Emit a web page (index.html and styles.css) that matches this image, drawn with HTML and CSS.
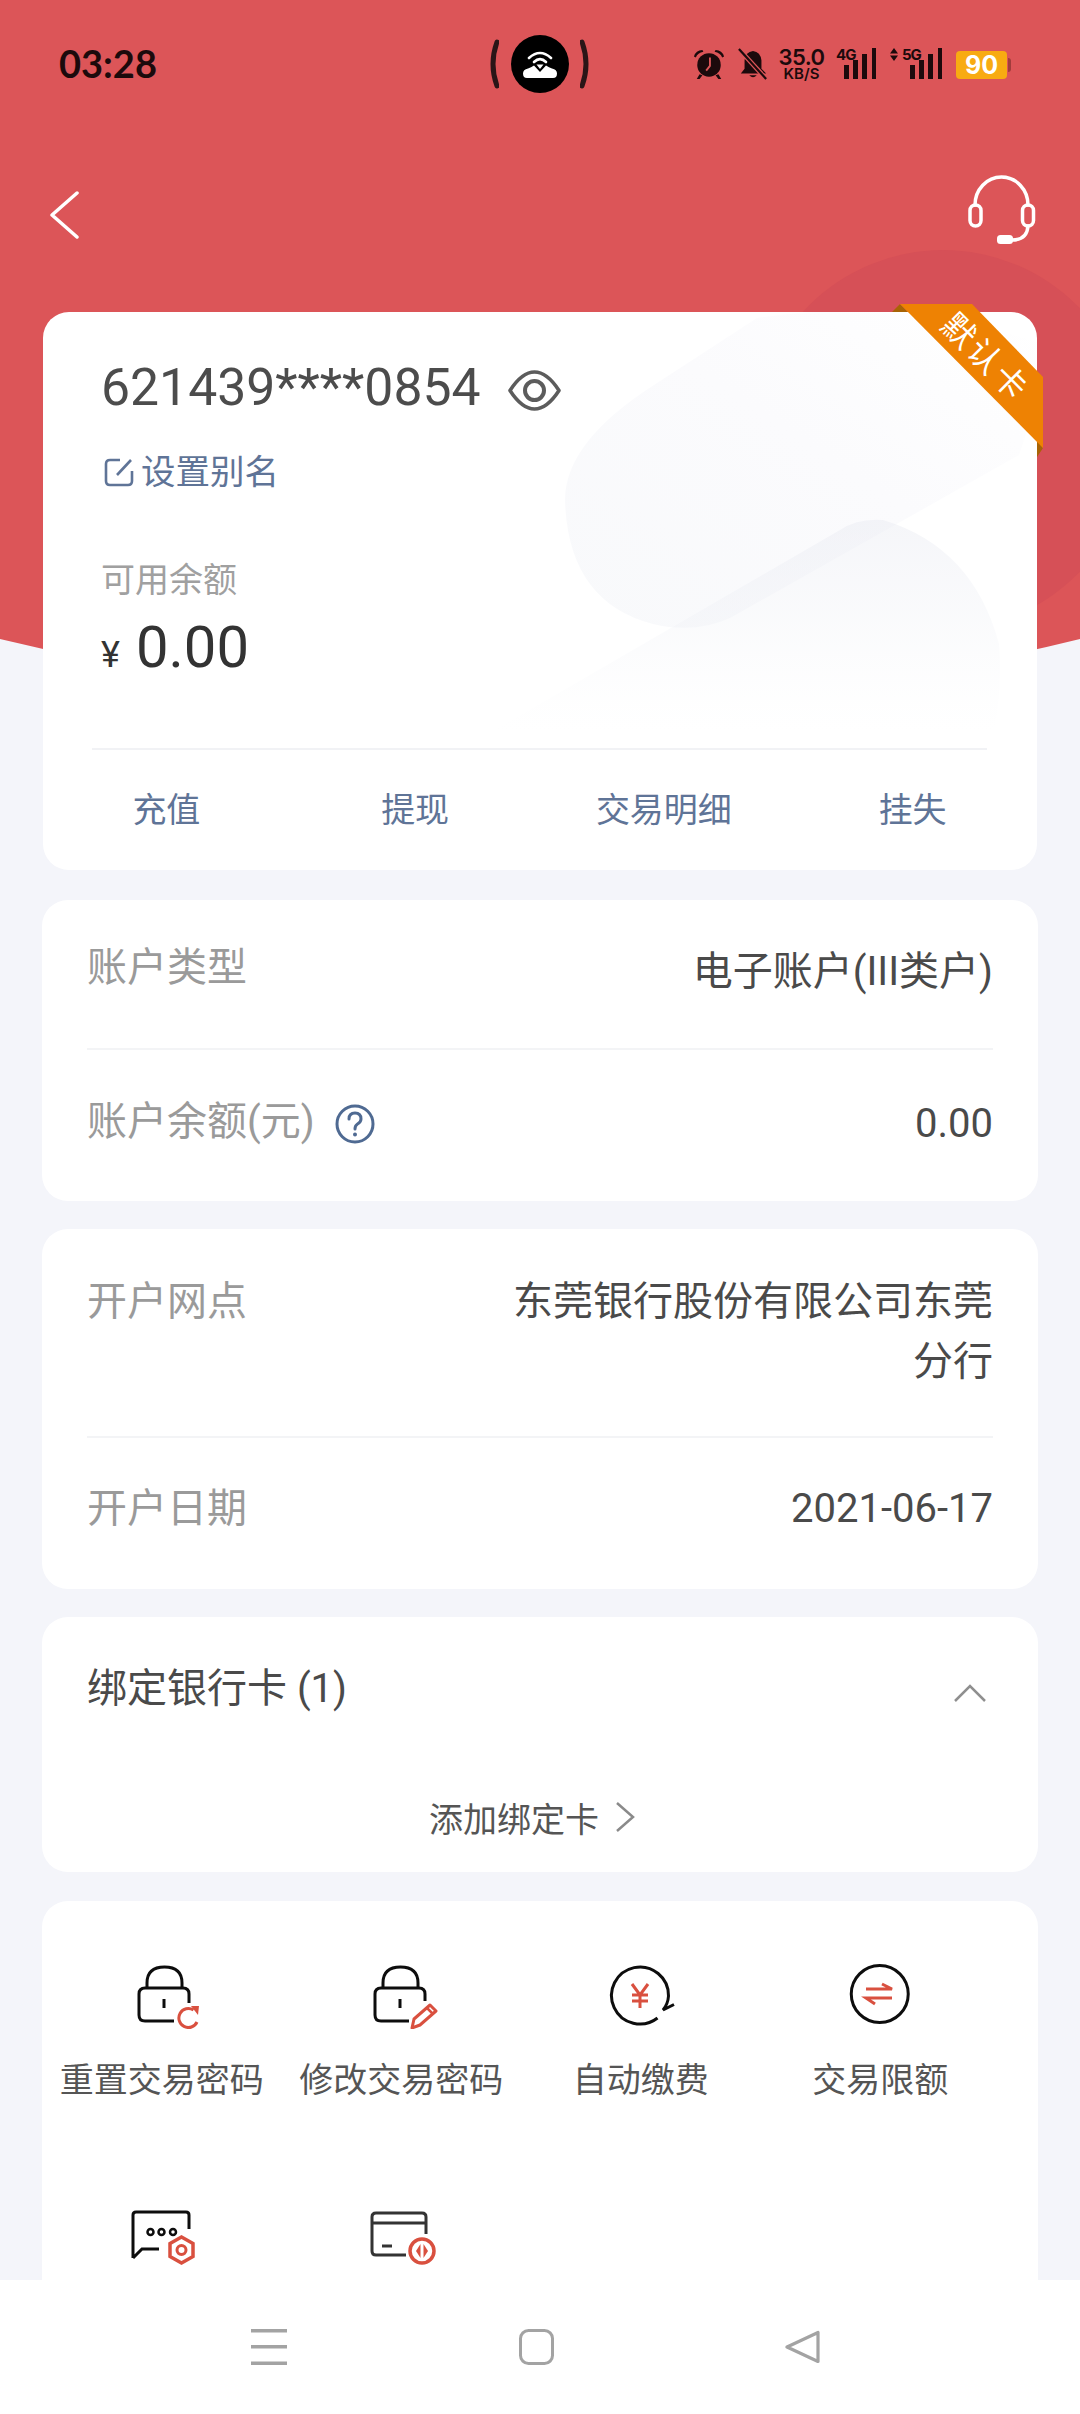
FILE: index.html
```html
<!DOCTYPE html>
<html lang="zh">
<head>
<meta charset="utf-8">
<title>账户详情</title>
<link rel="stylesheet" href="styles.css">
</head>
<body>
<div class="screen">
  <svg class="backdrop" width="1080" height="720" viewBox="0 0 1080 720" aria-hidden="true">
    <clipPath id="redclip"><path d="M0 0H1080V639Q540 772 0 639Z"/></clipPath>
    <path d="M0 0H1080V639Q540 772 0 639Z" fill="#dc5558"/>
    <circle cx="943" cy="440" r="190" fill="#d65057" clip-path="url(#redclip)"/>
  </svg>

  <header class="status">
    <span class="time">03:28</span>
    <div class="island">
      <svg width="10" height="50" viewBox="0 0 10 50"><path d="M8 3Q0 25 8 47" fill="none" stroke="#2a1517" stroke-width="5" stroke-linecap="round"/></svg>
      <span class="dot">
        <svg width="34" height="27" viewBox="0 0 34 27"><g fill="none" stroke="#fff" stroke-width="2.600" stroke-linecap="round"><path d="M6 7Q17 -3 28 7"/><path d="M11 11Q17 5 23 11"/></g><path d="M13.500 13.500H20.500L17 18Z" fill="#fff"/><path d="M4 27Q0 27 0 22.500Q0 18.500 5 17.500Q8 16.500 11 14.500L17 21L23 14.500Q26 16.500 29 17.500Q34 18.500 34 22.500Q34 27 30 27Z" fill="#fff"/></svg>
      </span>
      <svg width="10" height="50" viewBox="0 0 10 50"><path d="M2 3Q10 25 2 47" fill="none" stroke="#2a1517" stroke-width="5" stroke-linecap="round"/></svg>
    </div>
    <div class="sys">
      <svg class="ic-alarm" width="32" height="32" viewBox="0 0 34 34"><g fill="#1c0a0c"><circle cx="17" cy="18" r="12.500"/><path d="M1 9Q3 2 10 2L11 4Q5 5 3 10ZM33 9Q31 2 24 2L23 4Q29 5 31 10Z"/><path d="M7 28l-3 5h3l3-4zM27 28l3 5h-3l-3-4z"/></g><path d="M18 10V19L14 24" fill="none" stroke="#dc5558" stroke-width="2"/></svg>
      <svg class="ic-bell" width="30" height="32" viewBox="0 0 32 34"><path d="M16 3Q24 4 25 13V22L30 27H3L7 22V13Q8 4 16 3Z" fill="#1c0a0c"/><path d="M12 29Q16 33 20 29Z" fill="#1c0a0c"/><path d="M0 0L31 34" stroke="#dc5558" stroke-width="5"/><path d="M1 1L30 33" stroke="#1c0a0c" stroke-width="2.400"/></svg>
      <span class="speed"><b>35.0</b><i>KB/S</i></span>
      <span class="net"><span class="net-l">4G</span><svg width="32" height="31" viewBox="0 0 32 31"><g fill="#1c0a0c"><rect x="0" y="17" width="5" height="14"/><rect x="9" y="12" width="5" height="19"/><rect x="18" y="6" width="5" height="25"/><rect x="28" y="0" width="4" height="31"/></g></svg></span>
      <span class="net net-5"><svg class="updown" width="8" height="13" viewBox="0 0 8 13"><path d="M4 0L8 5.500H0ZM4 13L8 7.500H0Z" fill="#1c0a0c"/></svg><span class="net-l">5G</span><svg width="32" height="31" viewBox="0 0 32 31"><g fill="#1c0a0c"><rect x="0" y="17" width="5" height="14"/><rect x="9" y="12" width="5" height="19"/><rect x="18" y="6" width="5" height="25"/><rect x="28" y="0" width="4" height="31"/></g></svg></span>
      <span class="batt"><span class="batt-body">90</span><span class="batt-tip"></span></span>
    </div>
  </header>

  <nav class="topbar">
    <svg width="32" height="48" viewBox="0 0 32 48"><path d="M28 2L3 24L28 46" fill="none" stroke="#fff" stroke-width="3.500" stroke-linecap="round" stroke-linejoin="round"/></svg>
    <svg class="headset" width="68" height="70" viewBox="0 0 68 70"><g fill="none" stroke="#fff" stroke-width="3.500" stroke-linecap="round"><path d="M7 30A26.500 28 0 0 1 60 30"/><rect x="2" y="30" width="11" height="21" rx="5.500"/><rect x="54.500" y="30" width="11" height="21" rx="5.500"/><path d="M60 51Q59 65 44 65"/></g><rect x="29" y="60" width="16" height="9" rx="3.500" fill="#fff"/></svg>
  </nav>

  <main class="content">
    <section class="card bal">
      <svg class="water" width="994" height="558" viewBox="0 0 994 558" aria-hidden="true">
        <defs>
          <linearGradient id="wg" x1="1" y1="0" x2="0" y2="1"><stop offset="0" stop-color="#fff"/><stop offset=".45" stop-color="#fbfbfd"/><stop offset="1" stop-color="#f8f9fb"/></linearGradient>
          <linearGradient id="wg2" gradientUnits="userSpaceOnUse" x1="0" y1="208" x2="0" y2="420"><stop offset="0" stop-color="#e6e8f0" stop-opacity=".4"/><stop offset=".45" stop-color="#eceef4" stop-opacity=".28"/><stop offset="1" stop-color="#f4f5f9" stop-opacity="0"/></linearGradient>
        </defs>
        <path d="M714 6L611 73Q522 130 522 188Q525 290 610 312Q652 322 687 306L976 143L994 90V30Q850 -15 714 6Z" fill="url(#wg)"/>
        <path d="M440 425L797 218Q815 206 840 208Q930 235 956 332Q960 380 949 430Z" fill="url(#wg2)"/>
      </svg>
      <div class="ribbon">
        <svg class="ribbon-bg" width="156" height="160" viewBox="0 0 156 160" aria-hidden="true">
          <path d="M4 9L12 1L20 9Z" fill="#a86405"/>
          <path d="M149 137L155 145L149 154Z" fill="#a86405"/>
          <path d="M12 1H84L155 74V145Z" fill="#ee8203"/>
        </svg>
        <span class="ribbon-t">默认卡</span>
      </div>
      <div class="bal-top">
        <div class="no-row">
          <span class="no">621439****0854</span>
          <svg class="eye" width="53" height="41" viewBox="0 0 53 41"><path d="M2 20.500Q14 2 26.500 2Q39 2 51 20.500Q39 39 26.500 39Q14 39 2 20.500Z" fill="none" stroke="#5c5c5c" stroke-width="3.600" stroke-linejoin="round"/><circle cx="26.500" cy="20.500" r="9.500" fill="none" stroke="#5c5c5c" stroke-width="4"/></svg>
        </div>
        <div class="alias">
          <svg width="30" height="30" viewBox="0 0 30 30"><path d="M16 3H6Q2 3 2 7V24Q2 28 6 28H24Q28 28 28 24V14" fill="none" stroke="#5f7497" stroke-width="2.600"/><path d="M13 18L27 3" stroke="#5f7497" stroke-width="2.600" fill="none"/></svg>
          <span>设置别名</span>
        </div>
        <div class="avail">可用余额</div>
        <div class="amount"><span class="yen">¥</span><span class="amt">0.00</span></div>
      </div>
      <div class="bal-line"></div>
      <div class="actions">
        <span>充值</span><span>提现</span><span>交易明细</span><span>挂失</span>
      </div>
    </section>

    <section class="card card-wide">
      <div class="row row-a">
        <span class="k">账户类型</span><span class="v">电子账户(III类户)</span>
      </div>
      <div class="row row-b">
        <span class="k">账户余额(元)<svg class="q" width="40" height="40" viewBox="0 0 40 40"><circle cx="20" cy="20" r="18" fill="none" stroke="#4f6a92" stroke-width="3"/><path d="M14 15Q14 9 20 9Q26 9 26 15Q26 18 22.500 20Q20 21.500 20 25" fill="none" stroke="#4f6a92" stroke-width="3" stroke-linecap="round"/><circle cx="20" cy="30.500" r="2" fill="#4f6a92"/></svg></span><span class="v">0.00</span>
      </div>
    </section>

    <section class="card card-wide">
      <div class="row row-c">
        <span class="k">开户网点</span><span class="v v-wrap">东莞银行股份有限公司东莞分行</span>
      </div>
      <div class="row row-d">
        <span class="k">开户日期</span><span class="v">2021-06-17</span>
      </div>
    </section>

    <section class="card card-wide bind">
      <div class="bind-h">
        <span class="bind-t">绑定银行卡 (1)</span>
        <svg width="34" height="20" viewBox="0 0 34 20"><path d="M2 18L17 3L32 18" fill="none" stroke="#8f8f8f" stroke-width="2.500"/></svg>
      </div>
      <div class="bind-add">
        <span>添加绑定卡</span>
        <svg width="20" height="32" viewBox="0 0 20 32"><path d="M2 2L18 16L2 30" fill="none" stroke="#8a8a8a" stroke-width="2.500"/></svg>
      </div>
    </section>

    <section class="card card-wide tools">
      <div class="tool">
        <svg width="80" height="66" viewBox="0 0 80 66"><g fill="none" stroke="#0d0d0d" stroke-width="3"><path d="M25 25V20Q25 4 42.500 4Q60 4 60 20V25"/><path d="M52 58H23Q17 58 17 52V31Q17 25 23 25H61Q67 25 67 31V40"/><path d="M42 36V45"/></g><path d="M71.500 47A9.500 9.500 0 1 0 75 59" fill="none" stroke="#d9503f" stroke-width="3"/><path d="M69 43L77 43L76 52Z" fill="#d9503f"/></svg>
        <span>重置交易密码</span>
      </div>
      <div class="tool">
        <svg width="80" height="66" viewBox="0 0 80 66"><g fill="none" stroke="#0d0d0d" stroke-width="3"><path d="M22 25V20Q22 4 39.500 4Q57 4 57 20V25"/><path d="M48 58H20Q14 58 14 52V31Q14 25 20 25H58Q64 25 64 31V38"/><path d="M39 36V45"/></g><path d="M51 65L53 56L69 42L75 48L59 62Z" fill="none" stroke="#d9503f" stroke-width="3" stroke-linejoin="round"/><path d="M66 45L72 51" stroke="#d9503f" stroke-width="2.500"/></svg>
        <span>修改交易密码</span>
      </div>
      <div class="tool">
        <svg width="80" height="66" viewBox="0 0 80 66"><path d="M56.500 55A28.500 28.500 0 1 1 67.500 33Q67 41 62 47L73 41.500" fill="none" stroke="#0d0d0d" stroke-width="3"/><g fill="none" stroke="#d9503f" stroke-width="3"><path d="M31 21L39 32L47 21M31 32H47M31 38H47M39 32V45"/></g></svg>
        <span>自动缴费</span>
      </div>
      <div class="tool">
        <svg width="80" height="66" viewBox="0 0 80 66"><circle cx="39.750" cy="31" r="28.500" fill="none" stroke="#0d0d0d" stroke-width="3"/><g fill="none" stroke="#d9503f" stroke-width="3"><path d="M26 26H52L42 21"/><path d="M52 35H26L35 41"/></g></svg>
        <span>交易限额</span>
      </div>
      <div class="tool">
        <svg width="80" height="66" viewBox="0 0 80 66"><path d="M11 51V8Q11 5 14 5H64Q67 5 67 8V22M37 42H20L11 51" fill="none" stroke="#0d0d0d" stroke-width="3"/><g fill="none" stroke="#0d0d0d" stroke-width="2.500"><circle cx="28.500" cy="25" r="3"/><circle cx="39.500" cy="25" r="3"/><circle cx="51" cy="25" r="3"/></g><path d="M59.500 30L71 36.500V49.500L59.500 56L48 49.500V36.500Z" fill="none" stroke="#d9503f" stroke-width="3.500"/><circle cx="59.500" cy="43" r="4.500" fill="none" stroke="#d9503f" stroke-width="3"/></svg>
      </div>
      <div class="tool">
        <svg width="80" height="66" viewBox="0 0 80 66"><g fill="none" stroke="#333" stroke-width="3"><path d="M45 48H15Q11 48 11 44V10Q11 6 15 6H61Q65 6 65 10V27"/><path d="M11 16H65"/><path d="M21 39H31"/></g><circle cx="61" cy="44" r="12" fill="none" stroke="#d9503f" stroke-width="3.500"/><g fill="#d9503f"><path d="M59.500 37V51L55 44Z"/><path d="M62.500 37V51L67 44Z"/></g></svg>
      </div>
    </section>
  </main>

  <footer class="navbar">
    <svg width="36" height="36" viewBox="0 0 36 36"><g fill="#a3a3a3"><rect width="36" height="3.500"/><rect y="16" width="36" height="3.500"/><rect y="32.500" width="36" height="3.500"/></g></svg>
    <svg width="35" height="36" viewBox="0 0 35 36"><rect x="1.500" y="1.500" width="32" height="33" rx="8" fill="none" stroke="#a3a3a3" stroke-width="3"/></svg>
    <svg width="35" height="34" viewBox="0 0 35 34"><path d="M33 2.500V31.500L2 17Z" fill="none" stroke="#a3a3a3" stroke-width="3.200" stroke-linejoin="round"/></svg>
  </footer>
</div>
</body>
</html>
```
FILE: styles.css
```css
* { box-sizing: border-box; }
html, body { margin: 0; padding: 0; }
body { font-family: Roboto, "Noto Sans CJK SC", sans-serif; background: #f4f5fa; }

.screen { position: relative; width: 1080px; height: 2414px; overflow: hidden; display: flex; flex-direction: column; background: #f4f5fa; }
.backdrop { position: absolute; left: 0; top: 0; }

.status { position: relative; flex: none; height: 126px; padding: 0 69px 0 59px; display: flex; align-items: flex-start; }
.time { font: 700 38px/40px Lato, Inter, sans-serif; color: #1c0a0c; width: 430px; margin-top: 43px; flex: none; }
.island { width: 101px; height: 58px; margin-top: 35px; display: flex; align-items: center; justify-content: space-between; flex: none; }
.dot { width: 58px; height: 58px; border-radius: 50%; background: #000; display: flex; align-items: center; justify-content: center; }
.sys { display: flex; align-items: flex-start; height: 32px; margin: 48px 0 0 auto; }
.ic-alarm { margin-right: 13px; }
.ic-bell { margin-right: 10px; }
.speed { display: flex; flex-direction: column; align-items: center; width: 47px; color: #1c0a0c; font-family: Inter, sans-serif; margin-right: 11px; }
.speed b { font-size: 22px; line-height: 19px; font-weight: 600; letter-spacing: -0.5px; }
.speed i { font-size: 15px; line-height: 13px; font-style: normal; font-weight: 600; }
.net { position: relative; display: flex; align-items: flex-end; height: 31px; margin-right: 14px; }
.net-l { font: 700 15px/14px Inter, sans-serif; color: #1c0a0c; position: absolute; left: 0; top: 0; letter-spacing: -1px; }
.net > svg:last-child { margin-left: 8px; }
.net-5 .net-l { left: 12px; }
.net-5 > svg:last-child { margin-left: 20px; }
.updown { position: absolute; left: 0; top: 0; }
.batt { display: flex; align-items: center; margin-top: 3px; }
.batt-body { width: 51px; height: 28px; border-radius: 4px; background: #f8ab12; color: #fff; font: 700 25px/28px Inter, sans-serif; text-align: center; }
.batt-tip { width: 3px; height: 14px; background: #a03c3c; border-radius: 0 3px 3px 0; margin-left: 1px; }

.topbar { position: relative; flex: none; height: 186px; padding: 65px 44px 0 49px; display: flex; justify-content: space-between; align-items: flex-start; }
.headset { margin-top: -16px; }

.content { position: relative; flex: 1; min-height: 0; padding: 0 43px; display: flex; flex-direction: column; gap: 28px; }
.card { background: #fff; border-radius: 26px; flex: none; }
.card-wide { margin: 0 -1px; }

.bal { position: relative; height: 558px; margin-bottom: 2px; display: flex; flex-direction: column; }
.water { position: absolute; left: 0; top: 0; }
.bal-top { position: relative; flex: 1; padding: 48px 0 0 58px; }
.no-row { display: flex; align-items: center; gap: 27px; height: 56px; }
.no { font-size: 51.700px; line-height: 56px; color: #4c4c4c; }
.eye { margin-top: 4px; }
.alias { display: flex; align-items: center; gap: 7px; margin-top: 34px; color: #5f7497; font-size: 34.500px; line-height: 44px; height: 44px; }
.alias svg { margin-left: 3px; }
.avail { margin-top: 64px; font-size: 34px; line-height: 44px; color: #a0a0a0; }
.amount { display: flex; align-items: baseline; margin-top: 12px; color: #333; }
.yen { font-size: 36px; margin-right: 16px; }
.amt { font-size: 58px; line-height: 66px; }
.bal-line { position: relative; height: 2px; margin: 0 50px 0 49px; background: #f1f2f5; }
.actions { position: relative; height: 120px; padding-bottom: 6px; display: grid; grid-template-columns: repeat(4, 1fr); align-items: center; justify-items: center; color: #5f7497; font-size: 34px; margin-left: -1px; }
.ribbon { position: absolute; left: 845px; top: -9px; width: 156px; height: 160px; }
.ribbon-bg { position: absolute; left: 0; top: 0; }
.ribbon-t { position: absolute; left: 37px; top: 35px; width: 120px; text-align: center; color: #fff; font-size: 33px; line-height: 40px; letter-spacing: 3px; transform: rotate(45deg); white-space: nowrap; }

.row { display: flex; justify-content: space-between; align-items: flex-start; margin: 0 45px; font-size: 40px; line-height: 60px; }
.k { color: #9a9a9a; display: flex; align-items: center; height: 60px; }
.v { color: #4a4a4a; text-align: right; }
.q { margin-left: 20px; margin-top: 4px; }
.row-a { height: 150px; padding-top: 38px; border-bottom: 2px solid #f3f4f6; }
.row-a .v { margin-top: 4px; }
.row-b { height: 151px; padding-top: 42px; }
.row-b .v { margin-top: 2px; }
.row-c { height: 209px; padding-top: 43px; border-bottom: 2px solid #f3f4f6; }
.v-wrap { width: 480px; }
.row-d { height: 151px; padding-top: 41px; }

.bind { height: 255px; margin-bottom: 1px; }
.bind-h { display: flex; justify-content: space-between; align-items: flex-start; padding: 42px 51px 0 45px; }
.bind-h svg { margin-top: 24px; }
.bind-t { font-size: 40px; line-height: 60px; color: #4a4a4a; }
.bind-add { display: flex; justify-content: center; align-items: center; gap: 16px; margin-top: 73px; height: 50px; padding-right: 16px; color: #555; font-size: 34px; }

.tools { display: grid; grid-template-columns: repeat(4, 239.500px); grid-auto-rows: 244px; padding: 62px 0 0; height: 600px; }
.tool { display: flex; flex-direction: column; align-items: center; gap: 29px; color: #555; font-size: 34px; line-height: 44px; white-space: nowrap; }

.navbar { position: absolute; left: 0; right: 0; bottom: 0; height: 134px; background: #fff; display: flex; justify-content: space-between; align-items: center; padding: 0 260px 0 251px; }
```
